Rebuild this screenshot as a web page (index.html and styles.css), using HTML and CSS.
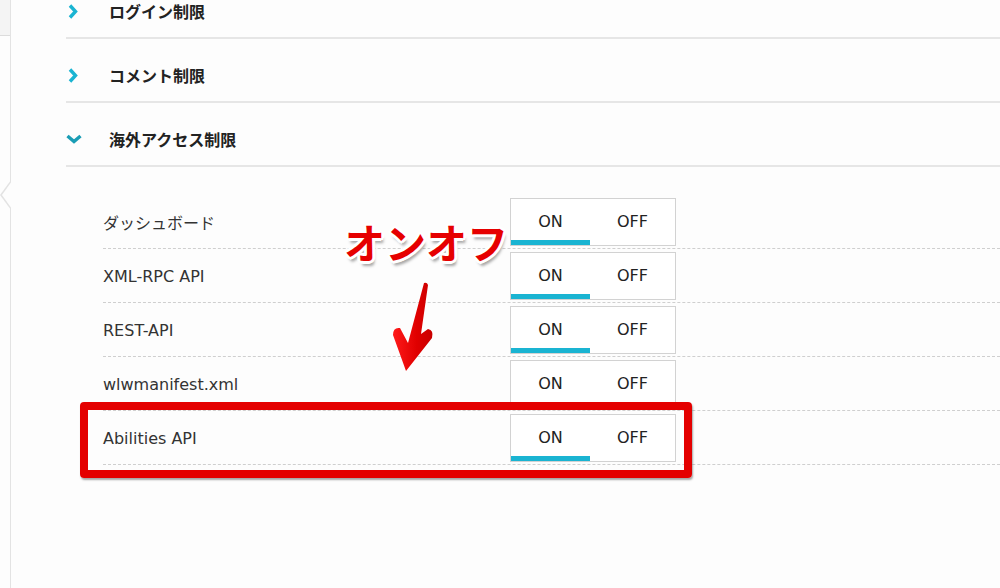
FILE: index.html
```html
<!DOCTYPE html>
<html lang="ja">
<head>
  <meta charset="UTF-8">
  <title>海外アクセス制限</title>
  <link rel="stylesheet" href="styles.css">
</head>
<body>

  <div class="page">
    <aside class="sidebar">
      <div class="sidebar-top"></div>
    </aside>

    <main class="main">
      <div class="acc-list">
        <div class="acc-item">
          <div class="acc-head">
            <span class="chev">
              <svg width="10" height="15" viewBox="0 0 10 15"><polyline points="2,1.5 7.5,7.5 2,13.5" fill="none" stroke="#1ab4d2" stroke-width="3.4"/></svg>
            </span>
            ログイン制限
          </div>
        </div>

        <div class="acc-item">
          <div class="acc-head">
            <span class="chev">
              <svg width="10" height="15" viewBox="0 0 10 15"><polyline points="2,1.5 7.5,7.5 2,13.5" fill="none" stroke="#1ab4d2" stroke-width="3.4"/></svg>
            </span>
            コメント制限
          </div>
        </div>

        <div class="acc-item open">
          <div class="acc-head">
            <span class="chev">
              <svg width="16" height="10" viewBox="0 0 16 10"><polyline points="1.5,2 8,7.5 14.5,2" fill="none" stroke="#1a9db5" stroke-width="3.4"/></svg>
            </span>
            海外アクセス制限
          </div>

          <div class="acc-body">
            <div class="row">
              <div class="label">ダッシュボード</div>
              <div class="toggle"><span class="active">ON</span><span>OFF</span></div>
            </div>
            <div class="row">
              <div class="label">XML-RPC API</div>
              <div class="toggle"><span class="active">ON</span><span>OFF</span></div>
            </div>
            <div class="row">
              <div class="label">REST-API</div>
              <div class="toggle"><span class="active">ON</span><span>OFF</span></div>
            </div>
            <div class="row">
              <div class="label">wlwmanifest.xml</div>
              <div class="toggle"><span>ON</span><span>OFF</span></div>
            </div>
            <div class="row">
              <div class="label">Abilities API</div>
              <div class="toggle"><span class="active">ON</span><span>OFF</span></div>
            </div>
          </div>
        </div>
      </div>
    </main>

    <!-- annotations drawn over the screenshot -->
    <div class="note">オンオフ</div>
    <svg class="arrow" width="50" height="95" viewBox="390 280 50 95">
      <defs>
        <linearGradient id="arrowFill" x1="0" y1="0" x2="1" y2="0">
          <stop offset="0" stop-color="#ff1a1a"/>
          <stop offset="0.6" stop-color="#e00000"/>
          <stop offset="1" stop-color="#c80000"/>
        </linearGradient>
      </defs>
      <path d="M424,283 Q427,282 428,285 L421,334 L428,329 Q434,330 432,338 L406,371 L393,335 Q393,327 400,328 L408,343 Z" fill="url(#arrowFill)"/>
    </svg>
    <div class="highlight"></div>
  </div>

</body>
</html>
```

FILE: styles.css
```css
body {
  margin: 0;
  font-family: 'DejaVu Sans', 'Noto Sans CJK JP', sans-serif;
  color: #333;
  background: #fdfdfd;
}

.page {
  position: relative;
  display: flex;
  width: 1000px;
  height: 588px;
  overflow: hidden;
}

.sidebar {
  position: relative;
  width: 10px;
  flex: 0 0 10px;
  border-right: 1px solid #e3e3e3;
}

.sidebar-top {
  height: 35px;
  background: #f4f4f4;
  border-bottom: 1px solid #dcdcdc;
}

/* little tail on the panel edge */
.sidebar::before,
.sidebar::after {
  content: "";
  position: absolute;
  top: 180px;
  right: -1px;
  border-style: solid;
  border-width: 15px 11px 15px 0;
  border-color: transparent #e3e3e3 transparent transparent;
}

.sidebar::after {
  top: 181px;
  right: -2px;
  border-width: 14px 10px 14px 0;
  border-color: transparent #fdfdfd transparent transparent;
}

.main {
  flex: 1;
  padding-left: 55px;
}

.acc-list {
  margin-top: -25px;
}

.acc-head {
  display: flex;
  align-items: center;
  padding: 27px 0 17px;
  line-height: 18px;
  font-family: 'Noto Sans CJK JP', sans-serif;
  font-size: 16px;
  font-weight: bold;
  color: #222;
  border-bottom: 2px solid #e6e6e6;
}

.chev {
  display: flex;
  align-items: center;
  width: 43px;
  padding-left: 2px;
  box-sizing: border-box;
}

.open .chev {
  padding-left: 0;
}

.acc-body {
  padding: 28px 0 0 37px;
}

.row {
  display: flex;
  align-items: center;
  padding: 3px 0 2px;
  border-bottom: 1px dashed #cfcfcf;
}

.label {
  flex: 0 0 407px;
  font-size: 16px;
  color: #333;
}

.toggle {
  display: flex;
  width: 166px;
  height: 48px;
  box-sizing: border-box;
  border: 1px solid #d2d2d2;
  background: #fff;
}

.toggle span {
  flex: 1;
  text-align: center;
  line-height: 45px;
  font-size: 16px;
  color: #222;
}

.toggle span:first-child {
  flex: 0 0 79px;
}

.toggle span.active {
  box-shadow: inset 0 -5px 0 #1ab4d2;
}

/* annotation overlays */
.note {
  position: absolute;
  left: 344px;
  top: 211px;
  font-family: 'Noto Sans CJK JP', sans-serif;
  font-size: 41px;
  font-weight: bold;
  color: #e60000;
  text-shadow:
    -3px 0 0 #fff, 3px 0 0 #fff, 0 -3px 0 #fff, 0 3px 0 #fff,
    -2px -2px 0 #fff, 2px -2px 0 #fff, -2px 2px 0 #fff, 2px 2px 0 #fff,
    2px 5px 3px rgba(0, 0, 0, 0.35);
}

.arrow {
  position: absolute;
  left: 390px;
  top: 280px;
}

.highlight {
  position: absolute;
  left: 80px;
  top: 402px;
  width: 612px;
  height: 76px;
  box-sizing: border-box;
  border: 8px solid #e40000;
  border-radius: 4px;
  box-shadow: 1px 2px 2px rgba(0, 0, 0, 0.35);
}
```
